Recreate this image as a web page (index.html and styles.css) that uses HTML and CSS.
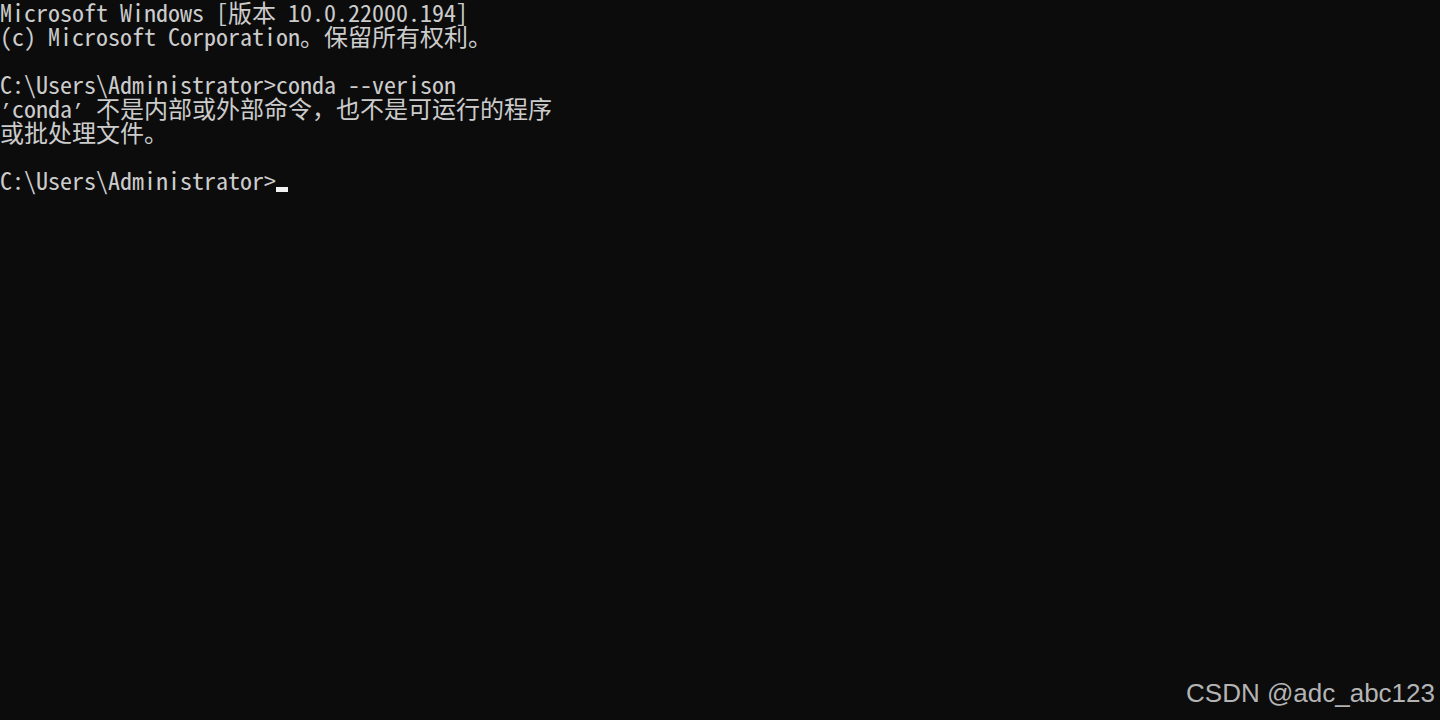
FILE: index.html
```html
<!DOCTYPE html>
<html>
  <head>
    <title>命令提示符</title>
    <link rel="stylesheet" href="styles.css">
  </head>
  <body>
    <div class="console">
      <div class="line">Microsoft Windows [版本 10.0.22000.194]</div>
      <div class="line">(c) Microsoft Corporation。保留所有权利。</div>
      <div class="line"></div>
      <div class="line">C:\Users\Administrator&gt;conda --verison</div>
      <div class="line"><span class="half">’</span>conda<span class="half">’</span> 不是内部或外部命令，也不是可运行的程序</div>
      <div class="line">或批处理文件。</div>
      <div class="line"></div>
      <div class="line">C:\Users\Administrator&gt;<span class="cursor"></span></div>
    </div>

    <div class="watermark">CSDN @adc_abc123</div>
  </body>
</html>
```

FILE: styles.css
```css
html,
body {
  height: 100%;
}
body {
  margin: 0;
  background-color: #0c0c0c;
  color: #cccccc;
  overflow: hidden;
  display: flex;
  flex-direction: column;
}
.console {
  flex: 1;
  font-family: "Noto Sans Mono CJK SC", "Liberation Mono", "Noto Sans CJK SC", monospace;
  font-size: 24px;
  line-height: 24px;
}
.line {
  height: 24px;
  white-space: pre;
}
.half {
  font-family: "Liberation Mono", monospace;
  font-size: 20px;
}
.cursor {
  display: inline-block;
  width: 12px;
  height: 5px;
  background-color: #f2f2f2;
  vertical-align: -2px;
}
.watermark {
  align-self: flex-end;
  padding: 0 5px 12px 0;
  font-family: "Liberation Sans", Arial, sans-serif;
  font-size: 26px;
  line-height: 30px;
  color: #b4b4b4;
}
```
